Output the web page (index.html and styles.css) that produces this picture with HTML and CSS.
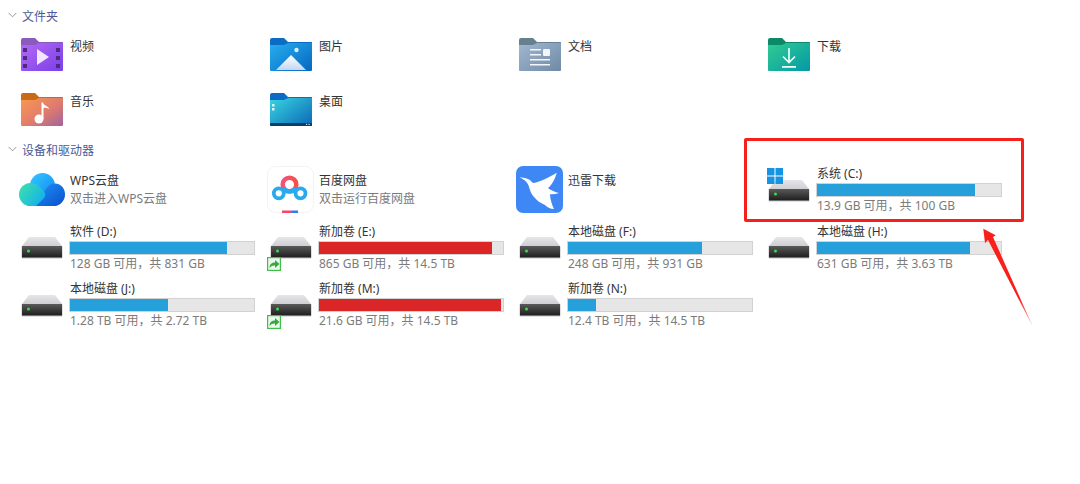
FILE: index.html
```html
<!DOCTYPE html>
<html lang="zh-CN">
<head>
<meta charset="utf-8">
<title>此电脑</title>
<link rel="stylesheet" href="styles.css">
</head>
<body>
<svg class="defs" width="0" height="0" aria-hidden="true">
  <defs>
    <linearGradient id="gVideo" x1="0" y1="0" x2="1" y2="1"><stop offset="0" stop-color="#b76cf5"/><stop offset="1" stop-color="#7a3fe8"/></linearGradient>
    <linearGradient id="gPic" x1="0" y1="0" x2="1" y2="1"><stop offset="0" stop-color="#29b2f2"/><stop offset="1" stop-color="#0667c0"/></linearGradient>
    <linearGradient id="gDoc" x1="0" y1="0" x2="1" y2="1"><stop offset="0" stop-color="#a5b9d2"/><stop offset="1" stop-color="#6f8aa6"/></linearGradient>
    <linearGradient id="gDown" x1="0" y1="0" x2="1" y2="1"><stop offset="0" stop-color="#33cf91"/><stop offset="1" stop-color="#0398a6"/></linearGradient>
    <linearGradient id="gMusic" x1="0" y1="0" x2="1" y2="1"><stop offset="0" stop-color="#ff9a4d"/><stop offset="0.6" stop-color="#dd7a6e"/><stop offset="1" stop-color="#a0649f"/></linearGradient>
    <linearGradient id="gDesk" x1="0" y1="0" x2="1" y2="1"><stop offset="0" stop-color="#3bdbe0"/><stop offset="1" stop-color="#0a67b8"/></linearGradient>
    <linearGradient id="gMount" x1="0" y1="0" x2="0" y2="1"><stop offset="0" stop-color="#ffffff"/><stop offset="1" stop-color="#c5d6f2"/></linearGradient>
    <linearGradient id="gBox" x1="0" y1="0" x2="0" y2="1"><stop offset="0" stop-color="#5a5a5a"/><stop offset="1" stop-color="#1e1e1e"/></linearGradient>
    <linearGradient id="gTop" x1="0" y1="0" x2="0" y2="1"><stop offset="0" stop-color="#e6e6ea"/><stop offset="1" stop-color="#cfcfd3"/></linearGradient>
    <linearGradient id="gCloudA" x1="0" y1="0" x2="1" y2="0.600"><stop offset="0" stop-color="#3fe3a8"/><stop offset="1" stop-color="#15b2ea"/></linearGradient>
    <linearGradient id="gCloudB" x1="0" y1="0" x2="1" y2="1"><stop offset="0" stop-color="#35c8ff"/><stop offset="1" stop-color="#0f86f5"/></linearGradient>
    <linearGradient id="gCloudC" x1="0" y1="0" x2="1" y2="1"><stop offset="0" stop-color="#1f92f7"/><stop offset="1" stop-color="#0a50cc"/></linearGradient>
    <linearGradient id="gRing" x1="0" y1="0" x2="1" y2="0"><stop offset="0" stop-color="#f2527a"/><stop offset="1" stop-color="#f6504a"/></linearGradient>
    <linearGradient id="gArrow" gradientUnits="userSpaceOnUse" x1="3" y1="3" x2="53" y2="101"><stop offset="0" stop-color="#fa1f1a"/><stop offset="0.7" stop-color="#fa1f1a"/><stop offset="1" stop-color="#fbb0a8"/></linearGradient>
    <symbol id="drive" viewBox="0 0 42 22">
      <path d="M8 0H34L41 9H1Z" fill="url(#gTop)"/>
      <rect x="0.5" y="9" width="41" height="12.5" rx="1" fill="#c4c4c4"/>
      <rect x="1" y="9" width="40" height="11.5" fill="url(#gBox)"/>
      <circle cx="7.5" cy="14" r="1.5" fill="#35e04a"/>
    </symbol>
  </defs>
</svg>

<section class="group">
  <h2 class="heading"><svg class="chevron" viewBox="0 0 10 6"><path d="M.7.7 5 5 9.300.7" fill="none" stroke="#8a8a8a"/></svg>文件夹</h2>
  <div class="grid folders">
    <div class="tile">
      <div class="icon">
        <svg class="folder" viewBox="0 0 42 33"><path d="M2 4H41a1 1 0 0 1 1 1V32a1 1 0 0 1-1 1H1a1 1 0 0 1-1-1V2Z" fill="url(#gVideo)"/><path d="M0 2a2 2 0 0 1 2-2H14L18 4H41a1 1 0 0 1 1 1H18L14 7H0Z" fill="#8a5bbd"/><path d="M16 11 28 19 16 27Z" fill="#f1e6ff"/><g fill="#4b2a80"><rect x="2" y="10" width="4" height="4"/><rect x="2" y="18" width="4" height="4"/><rect x="2" y="26" width="4" height="4"/><rect x="35" y="10" width="4" height="4"/><rect x="35" y="18" width="4" height="4"/><rect x="35" y="26" width="4" height="4"/></g></svg>
      </div>
      <span class="label name">视频</span>
    </div>
    <div class="tile">
      <div class="icon">
        <svg class="folder" viewBox="0 0 42 33"><path d="M2 4H41a1 1 0 0 1 1 1V32a1 1 0 0 1-1 1H1a1 1 0 0 1-1-1V2Z" fill="url(#gPic)"/><path d="M0 2a2 2 0 0 1 2-2H14L18 4H41a1 1 0 0 1 1 1H18L14 7H0Z" fill="#0a6cc4"/><circle cx="26.500" cy="12" r="2.200" fill="#d9efff"/><path d="M6 32 21 17 36 32Z" fill="url(#gMount)"/></svg>
      </div>
      <span class="label name">图片</span>
    </div>
    <div class="tile">
      <div class="icon">
        <svg class="folder" viewBox="0 0 42 33"><path d="M2 4H41a1 1 0 0 1 1 1V32a1 1 0 0 1-1 1H1a1 1 0 0 1-1-1V2Z" fill="url(#gDoc)"/><path d="M0 2a2 2 0 0 1 2-2H14L18 4H41a1 1 0 0 1 1 1H18L14 7H0Z" fill="#67808f"/><g fill="#f2f5f9"><rect x="11" y="11" width="11" height="1.500"/><rect x="11" y="16" width="11" height="1.500"/><rect x="24" y="11" width="7" height="7" rx="1"/><rect x="11" y="21" width="20" height="1.500"/><rect x="11" y="26" width="20" height="1.500"/></g></svg>
      </div>
      <span class="label name">文档</span>
    </div>
    <div class="tile">
      <div class="icon">
        <svg class="folder" viewBox="0 0 42 33"><path d="M2 4H41a1 1 0 0 1 1 1V32a1 1 0 0 1-1 1H1a1 1 0 0 1-1-1V2Z" fill="url(#gDown)"/><path d="M0 2a2 2 0 0 1 2-2H14L18 4H41a1 1 0 0 1 1 1H18L14 7H0Z" fill="#0c8a67"/><path d="M21 10V24M15 18.500 21 24.500 27 18.500" fill="none" stroke="#eefcf8" stroke-width="1.700"/><rect x="14" y="28" width="14" height="1.800" fill="#eefcf8"/></svg>
      </div>
      <span class="label name">下载</span>
    </div>
    <div class="tile">
      <div class="icon">
        <svg class="folder" viewBox="0 0 42 33"><path d="M2 4H41a1 1 0 0 1 1 1V32a1 1 0 0 1-1 1H1a1 1 0 0 1-1-1V2Z" fill="url(#gMusic)"/><path d="M0 2a2 2 0 0 1 2-2H14L18 4H41a1 1 0 0 1 1 1H18L14 7H0Z" fill="#c96a14"/><circle cx="18" cy="26" r="4.500" fill="#fff"/><path d="M20.500 26V9.500H22C22.500 13 28 13 28 16C26 15 24 14.500 22.500 15V26Z" fill="#fff"/></svg>
      </div>
      <span class="label name">音乐</span>
    </div>
    <div class="tile">
      <div class="icon">
        <svg class="folder" viewBox="0 0 42 33"><path d="M2 4H41a1 1 0 0 1 1 1V32a1 1 0 0 1-1 1H1a1 1 0 0 1-1-1V2Z" fill="url(#gDesk)"/><path d="M0 2a2 2 0 0 1 2-2H14L18 4H41a1 1 0 0 1 1 1H18L14 7H0Z" fill="#0a6cc4"/><rect x="0" y="30" width="42" height="3" rx="1" fill="#063e6e"/><g fill="#d9f6fa"><rect x="2" y="11" width="2.500" height="2.500"/><rect x="2" y="15" width="2.500" height="2.500"/></g><g fill="#cfe6f2"><rect x="36" y="30.800" width="1.200" height="1.200"/><rect x="38.500" y="30.800" width="1.200" height="1.200"/></g></svg>
      </div>
      <span class="label name">桌面</span>
    </div>
  </div>
</section>

<section class="group">
  <h2 class="heading"><svg class="chevron" viewBox="0 0 10 6"><path d="M.7.7 5 5 9.300.7" fill="none" stroke="#8a8a8a"/></svg>设备和驱动器</h2>
  <div class="grid drives">
    <div class="tile row">
      <div class="icon">
        <svg class="app cloud" viewBox="0 0 46 34"><circle cx="23.500" cy="12.500" r="12.500" fill="url(#gCloudB)"/><path d="M15 33 29 13.500C36 7 46 12 46 21.500A11.500 11.500 0 0 1 34.500 33Z" fill="url(#gCloudC)"/><path d="M11.500 10C15.500 10 18.500 11.500 20.500 13.500L25 18.500C27 21 26.500 23.500 24.500 25.500L17 33H11.500A11.500 11.500 0 0 1 11.500 10Z" fill="url(#gCloudA)"/></svg>
      </div>
      <div class="info"><span class="label">WPS云盘</span><span class="sub">双击进入WPS云盘</span></div>
    </div>
    <div class="tile row">
      <div class="icon">
        <svg class="app square" viewBox="0 0 47 47"><rect x="0.500" y="0.500" width="46" height="46" rx="8" fill="#fff" stroke="#f3f3f3"/><circle cx="22.500" cy="18.500" r="6.800" fill="none" stroke="url(#gRing)" stroke-width="4.500"/><path d="M16.500 22A6.800 6.800 0 0 0 28.500 22" fill="none" stroke="#2ba9ee" stroke-width="4.500"/><circle cx="11.800" cy="27.300" r="5" fill="none" stroke="#2ba9ee" stroke-width="3.800"/><circle cx="33.500" cy="27.300" r="5" fill="none" stroke="#2ba9ee" stroke-width="3.800"/><rect x="15" y="44.500" width="10" height="2.500" fill="#f4476b"/><rect x="25" y="44.500" width="6" height="2.500" fill="#2f7df0"/></svg>
      </div>
      <div class="info"><span class="label">百度网盘</span><span class="sub">双击运行百度网盘</span></div>
    </div>
    <div class="tile row">
      <div class="icon">
        <svg class="app square" viewBox="0 0 47 47"><rect width="47" height="47" rx="7" fill="#4087f6"/><path d="M3.300 11.300C6 11.500 9 12 12 13C14 14 15.500 15.500 17 17C22 16.500 32 12 40.700 6.700C40 10 37 18 32 22C35 24.500 39 26 43 27C40 28 37 28.500 34 28.300C34 33 36 39 38 43C34 43 31 41 29 39C25 37 21 35 19 32C16 29 15 27 14 24C13 21 12.500 19 11.300 17.300C10 15 7 13 3.300 11.300Z" fill="#fff"/></svg>
      </div>
      <div class="info single"><span class="label">迅雷下载</span></div>
    </div>
    <div class="tile row">
      <div class="icon drive-box">
        <svg class="drive"><use href="#drive"/></svg>
        <svg class="winlogo" viewBox="0 0 16 16"><g fill="#1793e4"><rect width="7.500" height="7.500"/><rect x="8.500" width="7.500" height="7.500"/><rect y="8.500" width="7.500" height="7.500"/><rect x="8.500" y="8.500" width="7.500" height="7.500"/></g></svg>
      </div>
      <div class="info"><span class="label">系统 (C:)</span><div class="bar"><div class="fill" style="width:86%"></div></div><span class="sub">13.9 GB 可用，共 100 GB</span></div>
    </div>

    <div class="tile row">
      <div class="icon drive-box"><svg class="drive"><use href="#drive"/></svg></div>
      <div class="info"><span class="label">软件 (D:)</span><div class="bar"><div class="fill" style="width:85.500%"></div></div><span class="sub">128 GB 可用，共 831 GB</span></div>
    </div>
    <div class="tile row">
      <div class="icon drive-box"><svg class="drive"><use href="#drive"/></svg>
        <svg class="share" viewBox="0 0 14 14"><rect x="0.600" y="0.600" width="12.800" height="12.800" fill="#eafaea" stroke="#3fbf4a" stroke-width="1.200"/><path d="M2.500 11C2.500 7 5 5.500 8 5.500V3L12.500 7 8 11V8.500C6 8.300 4 9 2.500 11Z" fill="#3fa544"/></svg>
      </div>
      <div class="info"><span class="label">新加卷 (E:)</span><div class="bar"><div class="fill full" style="width:94%"></div></div><span class="sub">865 GB 可用，共 14.5 TB</span></div>
    </div>
    <div class="tile row">
      <div class="icon drive-box"><svg class="drive"><use href="#drive"/></svg></div>
      <div class="info"><span class="label">本地磁盘 (F:)</span><div class="bar"><div class="fill" style="width:73%"></div></div><span class="sub">248 GB 可用，共 931 GB</span></div>
    </div>
    <div class="tile row">
      <div class="icon drive-box"><svg class="drive"><use href="#drive"/></svg></div>
      <div class="info"><span class="label">本地磁盘 (H:)</span><div class="bar"><div class="fill" style="width:83%"></div></div><span class="sub">631 GB 可用，共 3.63 TB</span></div>
    </div>

    <div class="tile row">
      <div class="icon drive-box"><svg class="drive"><use href="#drive"/></svg></div>
      <div class="info"><span class="label">本地磁盘 (J:)</span><div class="bar"><div class="fill" style="width:53%"></div></div><span class="sub">1.28 TB 可用，共 2.72 TB</span></div>
    </div>
    <div class="tile row">
      <div class="icon drive-box"><svg class="drive"><use href="#drive"/></svg>
        <svg class="share" viewBox="0 0 14 14"><rect x="0.600" y="0.600" width="12.800" height="12.800" fill="#eafaea" stroke="#3fbf4a" stroke-width="1.200"/><path d="M2.500 11C2.500 7 5 5.500 8 5.500V3L12.500 7 8 11V8.500C6 8.300 4 9 2.500 11Z" fill="#3fa544"/></svg>
      </div>
      <div class="info"><span class="label">新加卷 (M:)</span><div class="bar"><div class="fill full" style="width:99%"></div></div><span class="sub">21.6 GB 可用，共 14.5 TB</span></div>
    </div>
    <div class="tile row">
      <div class="icon drive-box"><svg class="drive"><use href="#drive"/></svg></div>
      <div class="info"><span class="label">新加卷 (N:)</span><div class="bar"><div class="fill" style="width:15%"></div></div><span class="sub">12.4 TB 可用，共 14.5 TB</span></div>
    </div>
  </div>
</section>

<div class="callout"></div>
<svg class="arrow" viewBox="0 0 60 110"><path d="M3.300 2.700 15.700 9.300 13 11 53 101 8 14 5 17Z" fill="url(#gArrow)"/></svg>
</body>
</html>
```

FILE: styles.css
```css
* { box-sizing: border-box; }
html, body { margin: 0; padding: 0; }
body {
  width: 1080px;
  height: 484px;
  overflow: hidden;
  background: #fff;
  padding-top: 7px;
  position: relative;
  font-family: "Noto Sans", "Noto Sans CJK SC", sans-serif;
  font-size: 12px;
  color: #333;
}
.defs { position: absolute; }
.group + .group { margin-top: 15px; }
.heading {
  display: flex;
  align-items: center;
  margin: 0;
  height: 18px;
  padding-left: 8px;
  font-size: 12px;
  font-weight: 400;
  color: #4a5a96;
}
.chevron { width: 9px; height: 6px; margin-right: 5px; margin-top: -3px; }
.grid {
  display: grid;
  grid-template-columns: repeat(4, 249px);
  padding-left: 21px;
}
.folders { margin-top: 13px; grid-auto-rows: 33px; row-gap: 22px; }
.drives { margin-top: 2px; grid-auto-rows: 57.500px; }
.tile { display: flex; }
.tile.row { align-items: center; }
.icon {
  position: relative;
  flex: none;
  width: 49px;
  display: flex;
  align-items: center;
}
.folder { display: block; width: 42px; height: 33px; }
.label { display: block; height: 19px; line-height: 19px; white-space: nowrap; color: #333; }
.label.name { height: 17px; line-height: 17px; }
.info { width: 186px; display: flex; flex-direction: column; }
.info.single { padding-bottom: 18px; }
.sub { display: block; height: 18px; line-height: 18px; color: #7b7b7b; white-space: nowrap; }
.bar {
  flex: none;
  width: 186px;
  height: 14px;
  margin-left: -1px;
  border: 1px solid #d2d2d2;
  background: #e6e6e6;
}
.fill { height: 100%; background: #26a0da; }
.fill.full { background: #da2626; }
.app { display: block; flex: none; }
.cloud { width: 46px; height: 34px; margin-left: -2px; }
.square { width: 47px; height: 47px; margin-left: -3px; }
.drive-box { height: 22px; margin-top: 2px; }
.drive { display: block; width: 42px; height: 22px; }
.winlogo { position: absolute; left: -1px; top: -12px; width: 16px; height: 16px; }
.share { position: absolute; left: -3px; top: 20px; width: 14px; height: 14px; }
.callout {
  position: absolute;
  left: 744px;
  top: 138px;
  width: 280px;
  height: 84px;
  border: 3px solid #f5201c;
  border-radius: 2px;
}
.arrow { position: absolute; left: 980px; top: 226px; width: 60px; height: 110px; }
```
